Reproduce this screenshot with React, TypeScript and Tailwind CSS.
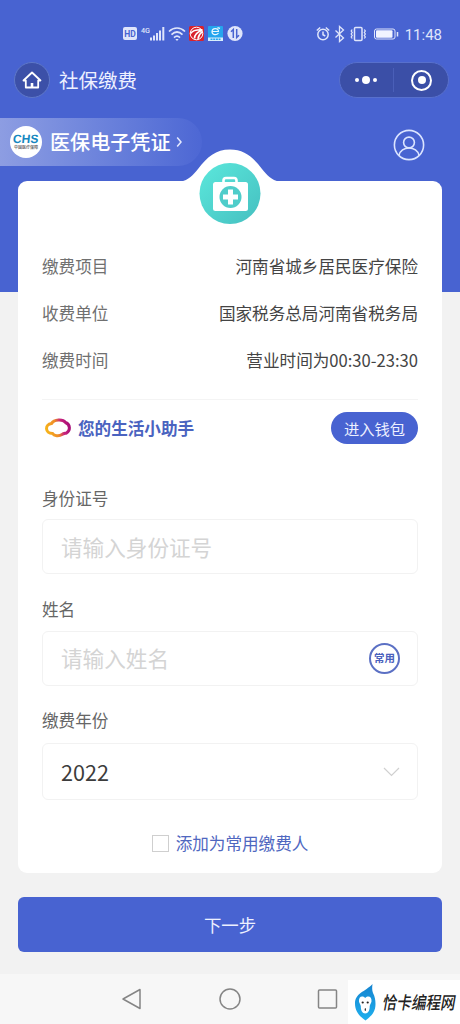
import { useState } from "react";
import type { ReactNode } from "react";

const details = [
  { label: "缴费项目", value: "河南省城乡居民医疗保险" },
  { label: "收费单位", value: "国家税务总局河南省税务局" },
  { label: "缴费时间", value: "营业时间为00:30-23:30" },
];

const StatusBar = () => (
  <div className="flex h-[46px] items-end pl-[123px] pr-[18px]">
    <div className="flex h-6 flex-1 items-center">
      <svg width="122" height="20" viewBox="0 0 122 20" fill="none">
        <rect x="0" y="3" width="14" height="13" rx="2" fill="#dfe5fb" />
        <text x="7" y="13" textAnchor="middle" fontSize="8.5" fontWeight="700" fontFamily="Roboto" fill="#4863d1">
          HD
        </text>
        <text x="18" y="8.500" fontSize="8" fontWeight="500" fontFamily="Roboto" fill="#dfe5fb" textLength="9" lengthAdjust="spacingAndGlyphs">
          4G
        </text>
        <g fill="#dfe5fb">
          <rect x="27" y="13.500" width="2" height="3" />
          <rect x="30" y="11.500" width="2" height="5" />
          <rect x="33" y="9" width="2" height="7.500" />
          <rect x="36" y="6.500" width="2" height="10" />
          <rect x="39.300" y="3" width="2" height="13.500" />
        </g>
        <g stroke="#dfe5fb" strokeWidth="1.700">
          <path d="M46 7.500c4.700-4.700 11.300-4.700 16 0" />
          <path d="M48.500 10.600c3.400-3.200 7.600-3.200 11 0" />
          <path d="M51 13.600c2-1.900 4-1.900 6 0" />
        </g>
        <path d="M52.300 15h3.400L54 17z" fill="#dfe5fb" />
        <rect x="66" y="2" width="15" height="15" rx="1.500" fill="#d9222d" />
        <circle cx="73.500" cy="9.500" r="6.300" stroke="#fff" strokeWidth="1" />
        <path d="M67.500 9.500c2-3.500 6-4 12-3.800M71.500 14.500c0-3.500 2.500-6.500 7.500-8.300M75 14.800c.300-3 1.500-5 4-7" stroke="#fff" strokeWidth="1.600" />
        <rect x="85" y="2" width="15" height="15" rx="1" fill="#25a5ee" />
        <path d="M89 7.500h6.500c0-4-6.500-4-6.500.300 0 3.200 4.500 3.700 6.500 1.400M94.500 3.600l2.500.8" stroke="#e9f7ff" strokeWidth="1.200" />
        <rect x="85" y="13.500" width="15" height="3.500" fill="#d8effc" />
        <path d="M87.500 15.200h10" stroke="#25a5ee" strokeWidth="1.500" strokeDasharray="2 .7" />
        <circle cx="112" cy="9.500" r="7.600" fill="#dfe5fb" />
        <path d="M110.300 14V5.500l-2.300 2.300M113.700 5v8.500l2.300-2.300" stroke="#4863d1" strokeWidth="1.500" />
      </svg>
    </div>
    <div className="flex h-6 items-center gap-[6px]">
      <svg width="83" height="18" viewBox="0 0 83 18" fill="none" stroke="#dfe5fb" strokeWidth="1.500">
        <circle cx="7" cy="9.500" r="5.200" />
        <path d="M7 6.500v3.200l2.300 1.300M.800 5.500l3.400-3M13.200 5.500l-3.400-3" />
        <path d="M19.500 5.500l8 7.500-4 3.500v-15l4 3.500-8 7.500" strokeWidth="1.300" />
        <rect x="38.500" y="2.500" width="7.500" height="13" rx="1" />
        <path d="M36.200 4.500l-1 1.500 1 1.500-1 1.500 1 1.500-1 1.500 1 1.500M48.300 4.500l1 1.500-1 1.500 1 1.500-1 1.500 1 1.500-1 1.500" strokeWidth="1.300" />
        <rect x="58.500" y="4" width="20.500" height="10" rx="2" strokeWidth="1" />
        <rect x="60" y="5.300" width="16.500" height="7.400" rx="1" fill="#f0f3ff" stroke="none" />
        <path d="M81.500 7v4.500" />
      </svg>
      <span className="mt-[2px] font-[Roboto] text-[15px] leading-none text-[#dfe5fb]">11:48</span>
    </div>
  </div>
);

const TitleBar = () => (
  <header className="mt-4 flex h-9 items-center pl-[14px] pr-[11px]">
    <button className="flex size-9 items-center justify-center rounded-full border border-[#5f78c8] bg-[#3c50a8]">
      <svg width="20" height="18" viewBox="0 0 20 18" fill="none" stroke="#fff" strokeWidth="1.800" strokeLinejoin="round">
        <path d="M1.500 9.500L10 1.500l8.500 8h-2.300v7H3.800v-7z" />
        <path d="M10 16.500v-4.500" strokeWidth="2.600" />
      </svg>
    </button>
    <h1 className="ml-[9px] flex-1 text-[19.5px] leading-6 text-[#eef1ff]">社保缴费</h1>
    <div className="flex h-9 w-[110px] items-center rounded-full border border-[#5870cc] bg-[#3b4fa7]">
      <button className="flex flex-1 items-center justify-center gap-[3px]">
        <span className="size-1 rounded-full bg-white" />
        <span className="size-[8px] rounded-full bg-white" />
        <span className="size-1 rounded-full bg-white" />
      </button>
      <span className="h-6 w-px bg-[#4a5fb8]" />
      <button className="flex flex-1 items-center justify-center pl-[2px]">
        <span className="flex size-[21px] items-center justify-center rounded-full border-[2.5px] border-white">
          <span className="size-2 rounded-full bg-white" />
        </span>
      </button>
    </div>
  </header>
);

const VoucherBar = () => (
  <div className="mt-5 flex h-12 items-center justify-between pr-[35px]">
    <button className="flex h-12 w-[202px] items-center rounded-r-full bg-linear-to-r from-[#8d9de2] to-[#4d67d4] pl-[10px]">
      <span className="flex size-8 flex-col items-center justify-center rounded-full bg-white pb-px">
        <span className="-skew-x-6 font-['Liberation_Sans'] text-[12px] leading-[10px] font-bold text-[#1687c0]">CHS</span>
        <span className="text-[4px] leading-[6px] font-bold whitespace-nowrap text-[#777]">中国医疗保障</span>
      </span>
      <span className="ml-2 text-[20.1px] leading-6 font-medium text-white">医保电子凭证</span>
      <svg className="ml-[5px]" width="7" height="12" viewBox="0 0 7 12" fill="none" stroke="#e4e9ff" strokeWidth="1.500">
        <path d="M1.200 1.500L5 6l-3.800 4.500" />
      </svg>
    </button>
    <svg className="mt-[5px]" width="32" height="32" viewBox="0 0 32 32" fill="none" stroke="#dbe4ff" strokeWidth="1.600">
      <circle cx="16" cy="16" r="14.600" />
      <circle cx="16" cy="13.500" r="5.400" />
      <path d="M6 26.500c1.500-10 18.500-10 20 0" />
    </svg>
  </div>
);

// White hump that rises out of the card's top edge, with the medical kit badge in it
const CardBadge = () => (
  <svg className="absolute -top-8 left-[162px]" width="100" height="76" viewBox="0 0 100 76" fill="none">
    <defs>
      <linearGradient id="kit" x1="0" y1="0" x2="1" y2="1">
        <stop offset="0" stopColor="#5be8dc" />
        <stop offset="1" stopColor="#45bfc0" />
      </linearGradient>
    </defs>
    <path d="M0 33C9 31 13 26 18 20C27 8 36 .500 50 .500s23 7.500 32 19.500c5 6 9 11 18 13z" fill="#fff" />
    <circle cx="50" cy="44.500" r="30.500" fill="url(#kit)" />
    <path d="M43.500 34v-2.500c0-1.500 1-2.500 2.500-2.500h8c1.500 0 2.500 1 2.500 2.500V34" stroke="#fff" strokeWidth="2.600" />
    <rect x="33" y="33" width="35" height="29" rx="2.500" fill="#fff" />
    <circle cx="50.500" cy="48" r="11" fill="#4fcdca" />
    <path d="M50.500 40.500v15M43 48h15" stroke="#fff" strokeWidth="5" />
  </svg>
);

const Field = ({ label, className, children }: { label: string; className: string; children: ReactNode }) => (
  <div className={className}>
    <div className="text-[16.6px] leading-6 text-[#666]">{label}</div>
    {children}
  </div>
);

const NavBar = () => (
  <nav className="relative mt-[22px] flex h-[50px] items-center bg-[#f7f7f7] pl-[121px]">
    <svg width="220" height="24" viewBox="0 0 220 24" fill="none" stroke="#858585" strokeWidth="1.500" strokeLinejoin="round">
      <path d="M2 12L19 2.500v19z" />
      <circle cx="109" cy="12" r="10" />
      <rect x="197.500" y="3" width="18" height="18" rx="1" />
    </svg>
    <div className="absolute right-0 bottom-0 flex h-11 w-28 items-center bg-white pl-[6px]">
      <svg width="22" height="37" viewBox="0 0 22 37" className="shrink-0">
        <defs>
          <linearGradient id="leaf" x1="0" y1="0" x2="0" y2="1">
            <stop offset="0" stopColor="#1583cf" />
            <stop offset="1" stopColor="#1fb0ee" />
          </linearGradient>
        </defs>
        <path d="M18.500 0C18 4 18 6 19 9c1.800 3 2.500 7 2.500 11 0 8-4 12-10 16.500C5 32 1 27 1 19.500 1 9 11 8 18.500 0z" fill="url(#leaf)" />
        <path d="M11.200 14C8 11 4.500 13 5 17.500c.300 2 1.800 3 1.800 5 0 4 1.500 7 4.400 7s4.500-3 4.500-7c0-2 1.500-3 1.800-5 .500-4.500-3.100-6.500-6.300-3.500z" fill="#fff" />
        <circle cx="8.700" cy="18.500" r="1.100" fill="#222" />
        <circle cx="13.700" cy="18.500" r="1.100" fill="#222" />
        <ellipse cx="11.300" cy="25.500" rx=".6" ry="1.500" fill="#222" />
      </svg>
      <span className="ml-[7px] -skew-x-12 scale-y-120 text-[14.6px] leading-5 font-medium whitespace-nowrap text-[#222]">
        恰卡编程网
      </span>
    </div>
  </nav>
);

export default function App() {
  const [idNumber, setIdNumber] = useState("");
  const [name, setName] = useState("");
  const [saved, setSaved] = useState(false);

  return (
    <div className="h-[1024px] w-[460px] overflow-hidden bg-[linear-gradient(#4863d1_292px,#f2f2f2_292px)] font-['Noto_Sans_CJK_SC',sans-serif]">
      <StatusBar />
      <TitleBar />
      <VoucherBar />

      <main className="relative mx-[18px] mt-[15px] h-[692px] rounded-[9px] bg-white px-6 pt-[61px]">
        <CardBadge />
        {details.map((item) => (
          <div key={item.label} className="flex h-[47px] items-center justify-between text-[16.6px] leading-6">
            <span className="text-[#707070]">{item.label}</span>
            <span className="text-[#444]">{item.value}</span>
          </div>
        ))}

        <div className="mt-4 flex h-[45px] items-end border-t border-[#f4f4f4]">
          <div className="flex h-8 flex-1 items-center">
            <svg className="ml-[2px]" width="27" height="20" viewBox="0 0 27 20" fill="none">
              <defs>
                <linearGradient id="wallet" x1="0" y1=".6" x2="1" y2=".4">
                  <stop offset="0" stopColor="#f6b21a" />
                  <stop offset=".45" stopColor="#ee8a2a" />
                  <stop offset=".7" stopColor="#c8237c" />
                  <stop offset="1" stopColor="#a80f78" />
                </linearGradient>
              </defs>
              <path
                d="M7.500 5.500C10 1 19 .800 21.500 4.500c5 2 5 8 1 10.500-2 .500-3 .500-4.500 1.500-3 2-8 1.500-9.500-1C1 15.500.500 6.500 7.500 5.500z"
                stroke="url(#wallet)"
                strokeWidth="3"
              />
            </svg>
            <span className="ml-[7px] text-[16.6px] leading-6 font-bold text-[#4a63c0]">您的生活小助手</span>
          </div>
          <button className="h-8 w-[87px] rounded-full bg-[#4863d1] text-[15.3px] leading-8 text-[#edf0ff]">进入钱包</button>
        </div>

        <Field label="身份证号" className="mt-[42px]">
          <input
            className="mt-[9px] block h-[55px] w-full rounded-md border border-[#f2f2f2] px-[18px] text-[21.6px] text-[#333] outline-none placeholder:text-[#d4d4d4]"
            placeholder="请输入身份证号"
            value={idNumber}
            onChange={(e) => setIdNumber(e.target.value)}
          />
        </Field>

        <Field label="姓名" className="mt-[23px]">
          <div className="mt-[10px] flex h-[55px] items-center rounded-md border border-[#f2f2f2] pr-[17px] pl-[18px]">
            <input
              className="w-0 flex-1 text-[21.6px] text-[#333] outline-none placeholder:text-[#d4d4d4]"
              placeholder="请输入姓名"
              value={name}
              onChange={(e) => setName(e.target.value)}
            />
            <button className="size-[31px] rounded-full border-2 border-[#5b70c4] text-[10.5px] leading-none font-bold whitespace-nowrap text-[#4a61bd]">
              常用
            </button>
          </div>
        </Field>

        <Field label="缴费年份" className="mt-[22px]">
          <button className="mt-[11px] flex h-[57px] w-full items-center justify-between rounded-md border border-[#f2f2f2] pr-[17px] pl-[18px]">
            <span className="text-[21.6px] leading-8 text-[#3c3c3c]">2022</span>
            <svg width="17" height="10" viewBox="0 0 17 10" fill="none" stroke="#d0d0d0" strokeWidth="1.200">
              <path d="M1 1l7.500 7.500L16 1" />
            </svg>
          </button>
        </Field>

        <label className="mt-[31px] flex items-center justify-center gap-[7px] text-[16.6px] leading-6 text-[#4f67bf]">
          <input
            type="checkbox"
            className="size-[17px] appearance-none border border-[#cfcfcf] checked:bg-[#4863d1]"
            checked={saved}
            onChange={(e) => setSaved(e.target.checked)}
          />
          添加为常用缴费人
        </label>
      </main>

      <button className="mx-[18px] mt-6 block h-[55px] w-[424px] rounded-md bg-[#4863d1] pt-px text-[17.4px] text-[#edf0ff]">
        下一步
      </button>

      <NavBar />
    </div>
  );
}
